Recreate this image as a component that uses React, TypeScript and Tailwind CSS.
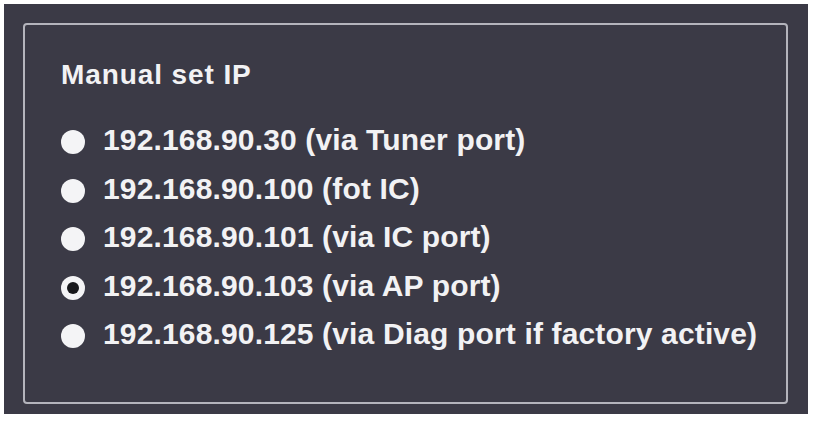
const options = [
  { label: "192.168.90.30 (via Tuner port)", selected: false },
  { label: "192.168.90.100 (fot IC)", selected: false },
  { label: "192.168.90.101 (via IC port)", selected: false },
  { label: "192.168.90.103 (via AP port)", selected: true },
  { label: "192.168.90.125 (via Diag port if factory active)", selected: false },
];

function Radio({ selected }: { selected: boolean }) {
  return (
    <span className="mt-[14px] flex h-[24px] w-[24px] shrink-0 items-center justify-center rounded-full bg-[#f4f4f6]">
      {selected && <span className="h-[12px] w-[12px] rounded-full bg-[#18181c]" />}
    </span>
  );
}

export default function App() {
  return (
    <div className="min-h-[423px] w-[813px] bg-white pl-[4px] pt-[4px] font-['Liberation_Sans',Arial,sans-serif]">
      <div className="h-[410px] w-[804px] bg-[#3b3a46] p-[19px]">
        <div className="h-[381px] w-[765px] rounded-[4px] border-2 border-[#b4b4bc] pl-[36px] pt-[36px]">
          <h2 className="text-[28px] font-bold leading-[28px] tracking-[0.9px] text-[#f2f2f4]">Manual set IP</h2>
          <ul className="mt-[27px] flex flex-col">
            {options.map((opt) => (
              <li key={opt.label} className="flex h-[48.5px] items-start gap-[18px]">
                <Radio selected={opt.selected} />
                <span className="text-[30px] font-bold leading-[48.5px] tracking-[0.15px] whitespace-nowrap text-[#f2f2f4]">
                  {opt.label}
                </span>
              </li>
            ))}
          </ul>
        </div>
      </div>
    </div>
  );
}
